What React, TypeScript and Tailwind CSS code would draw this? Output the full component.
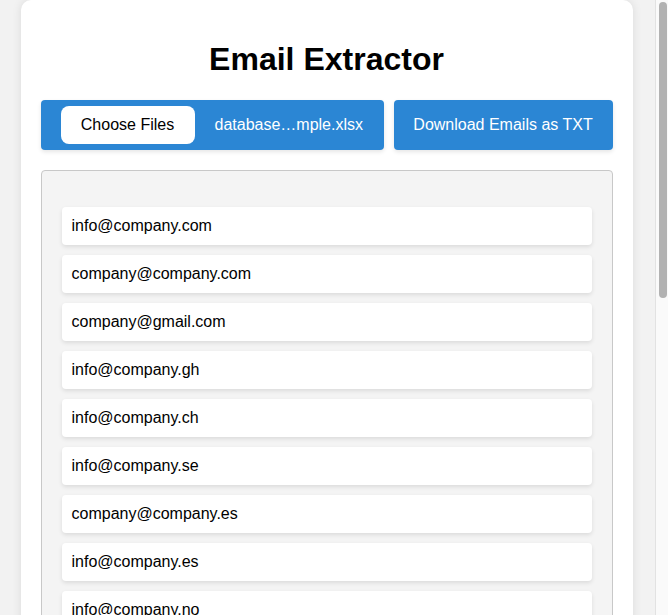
import { useState } from "react";

const emails = [
  "info@company.com",
  "company@company.com",
  "company@gmail.com",
  "info@company.gh",
  "info@company.ch",
  "info@company.se",
  "company@company.es",
  "info@company.es",
  "info@company.no",
  "info@company.de",
  "contact@company.com",
  "info@company.fr",
  "sales@company.com",
  "info@company.it",
  "support@company.com",
  "info@company.nl",
  "hello@company.com",
  "info@company.co.uk",
  "office@company.com",
  "info@company.dk",
  "admin@company.com",
];

export default function App() {
  const [list] = useState(emails);

  return (
    <main
      className="min-h-screen bg-[#f2f2f2] pr-[15px] pb-5 text-black"
      style={{ fontFamily: '"Liberation Sans", Arial, sans-serif' }}
    >
      <div className="mx-auto w-[612px] rounded-t-[10px] bg-white px-5 pt-[41px] pb-5 shadow-[0_0_10px_rgba(0,0,0,0.1)]">
        <h1 className="mb-[22px] text-center text-[32px] font-bold leading-[37px]">
          Email Extractor
        </h1>

        {/* Upload + download */}
        <div className="flex gap-[10px]">
          <label className="flex h-[50px] w-[343px] cursor-pointer items-center gap-5 rounded-[4px] bg-[#2b86d4] px-5 text-base text-white shadow-[0_2px_4px_rgba(0,0,0,0.1)]">
            <input type="file" className="hidden" />
            <span className="flex h-[38px] w-[134px] items-center justify-center rounded-[8px] bg-white text-black">
              Choose Files
            </span>
            <span>database…mple.xlsx</span>
          </label>
          <button className="h-[50px] w-[219px] rounded-[4px] bg-[#2b86d4] text-base text-white shadow-[0_2px_4px_rgba(0,0,0,0.1)]">
            Download Emails as TXT
          </button>
        </div>

        {/* Results */}
        <div className="mt-5 rounded-[4px] border border-[#c8c8c8] bg-[#f4f4f4] px-5 pt-9 pb-5">
          <ul className="flex flex-col gap-[10px]">
            {list.map((e) => (
              <li
                key={e}
                className="flex h-[38px] items-center rounded-[4px] bg-white px-[10px] text-base shadow-[0_2px_4px_rgba(0,0,0,0.1)]"
              >
                {e}
              </li>
            ))}
          </ul>
        </div>
      </div>

      {/* window scrollbar */}
      <div className="fixed top-0 right-0 h-screen w-[13px] border-l border-[#e2e2e2] bg-[#fafafa] px-[3px] pt-[2px]">
        <div className="h-[296px] w-[8px] rounded-full bg-[#b2b2b2]" />
      </div>
    </main>
  );
}
